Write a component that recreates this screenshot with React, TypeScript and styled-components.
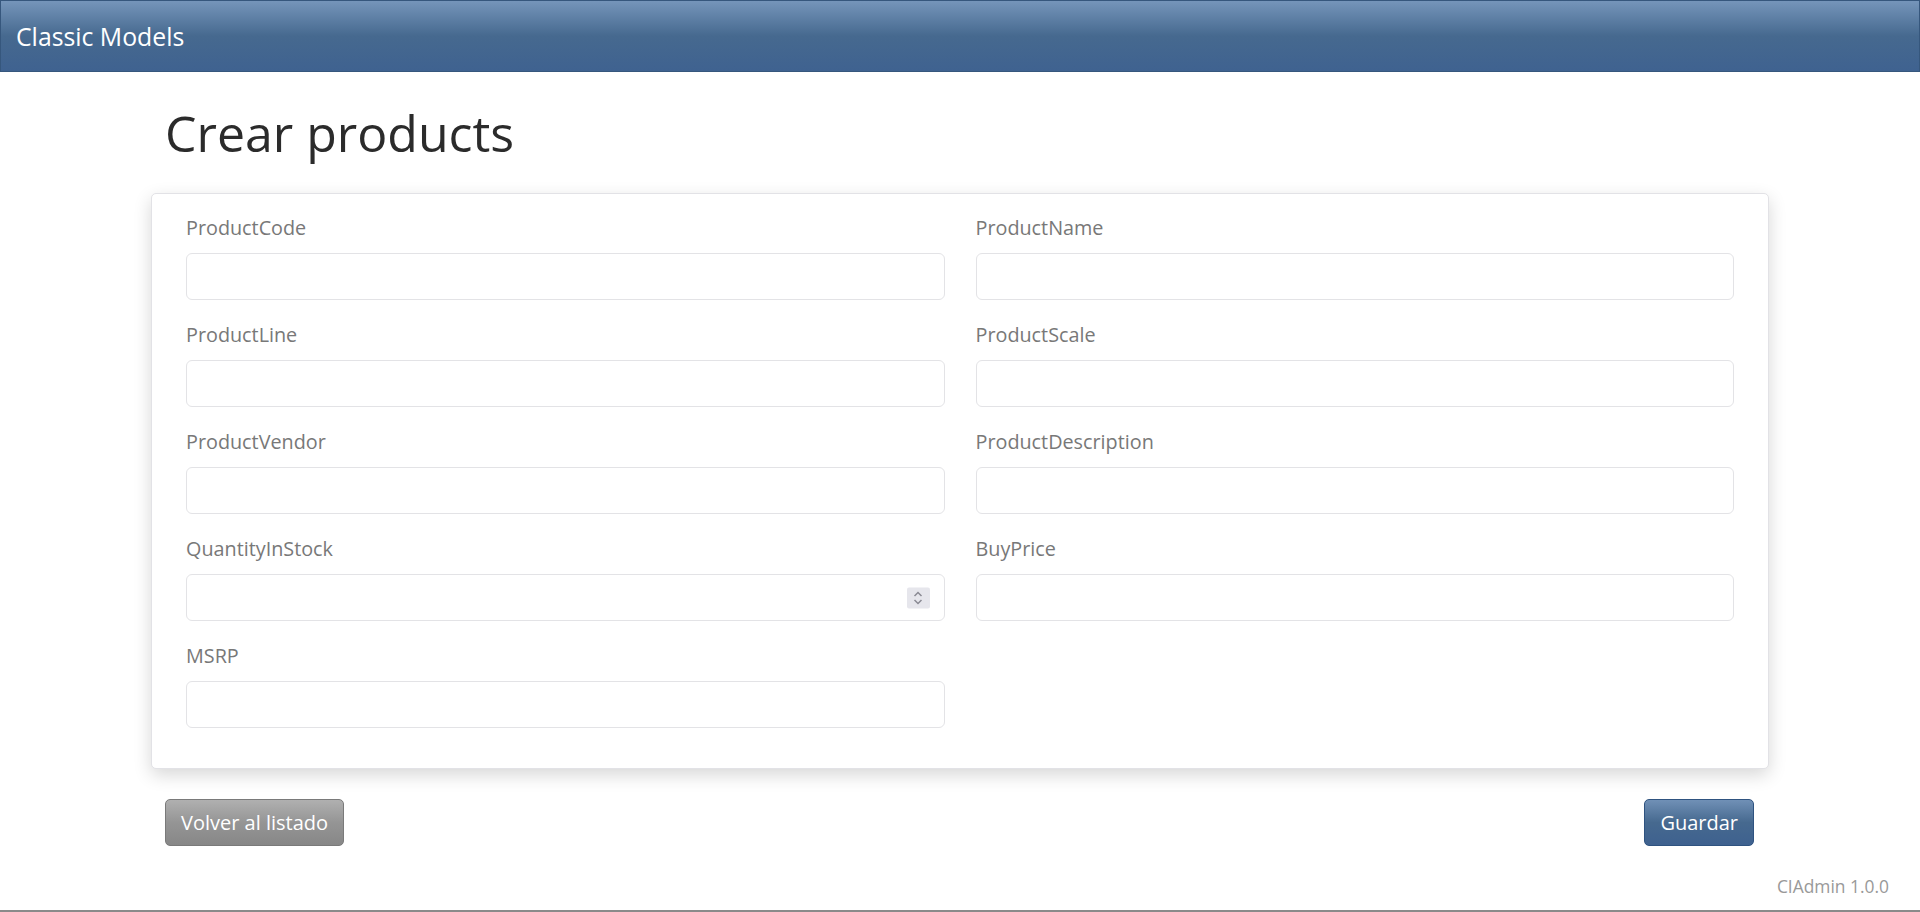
import React from 'react';
import styled, { createGlobalStyle } from 'styled-components';

const GlobalStyle = createGlobalStyle`
  html, body {
    margin: 0;
    padding: 0;
    background: #fff;
    font-family: "Open Sans", "Liberation Sans", sans-serif;
  }
  * {
    box-sizing: border-box;
  }
`;

const Page = styled.div`
  min-height: 912px;
  display: flex;
  flex-direction: column;
`;

const NavBar = styled.header`
  height: 72px;
  display: flex;
  align-items: center;
  padding: 0 15px;
  background: linear-gradient(to bottom, #7595ba 0%, #46698f 50%, #3f6290 100%);
  border: 1px solid #36577d;
  color: #fff;
  font-size: 24.8px;
`;

const Container = styled.main`
  width: 1618px;
  margin: 0 auto;
  flex: 1;
`;

const Title = styled.h1`
  margin: 0;
  padding: 24px 14px 22px;
  font-size: 50px;
  font-weight: 400;
  line-height: 75px;
  color: #2b2b2b;
`;

const Card = styled.section`
  background: #fff;
  border: 1px solid #e2e2e6;
  border-radius: 5px;
  box-shadow: 0 6px 18px rgba(0, 0, 0, 0.16);
  padding: 19px 34px 20px;
`;

const FormGrid = styled.div`
  display: grid;
  grid-template-columns: 1fr 1fr;
  column-gap: 31px;
`;

const Field = styled.div`
  display: flex;
  flex-direction: column;
  margin-bottom: 20px;
`;

const Label = styled.label`
  font-size: 19.8px;
  line-height: 30px;
  color: #787878;
  margin-bottom: 10px;
`;

const InputWrap = styled.div`
  position: relative;
`;

const Input = styled.input`
  width: 100%;
  height: 47px;
  border: 1px solid #e3e3e6;
  border-radius: 6px;
  background: #fff;
  padding: 0 14px;
  font: inherit;
  font-size: 19px;
  outline: none;
`;

const Spinner = styled.span`
  position: absolute;
  right: 15px;
  top: 50%;
  transform: translateY(-50%);
  width: 23px;
  height: 21px;
  background: #e6e6ec;
  border-radius: 2px;
  display: flex;
  align-items: center;
  justify-content: center;
`;

const Actions = styled.div`
  display: flex;
  justify-content: space-between;
  padding: 30px 15px 0 14px;
`;

const Button = styled.button<{ $variant: 'default' | 'primary' }>`
  height: 47px;
  padding: 0 15px;
  border-radius: 5px;
  font-family: "Open Sans", "Liberation Sans", sans-serif;
  font-size: 20px;
  color: #fff;
  cursor: pointer;
  border: 1px solid ${p => (p.$variant === 'primary' ? '#2f5380' : '#7a7a7a')};
  background: ${p =>
    p.$variant === 'primary'
      ? 'linear-gradient(to bottom, #7090b6 0%, #46698f 50%, #3e618f 100%)'
      : 'linear-gradient(to bottom, #b0b0b0 0%, #959595 50%, #878787 100%)'};
`;

const Version = styled.div`
  text-align: right;
  padding: 20px 31px 12px 0;
  font-size: 17.4px;
  color: #999;
`;

const BottomRule = styled.div`
  height: 2px;
  background: #8a8a8a;
`;

const fields: { name: string; spinner?: boolean }[] = [
  { name: 'ProductCode' },
  { name: 'ProductName' },
  { name: 'ProductLine' },
  { name: 'ProductScale' },
  { name: 'ProductVendor' },
  { name: 'ProductDescription' },
  { name: 'QuantityInStock', spinner: true },
  { name: 'BuyPrice' },
  { name: 'MSRP' },
];

const SpinIcon = () => (
  <svg width="12" height="17" viewBox="0 0 12 17" fill="none" stroke="#8a8a94" strokeWidth="1.5">
    <path d="M2.5 6.5 L6 3 L9.5 6.5" />
    <path d="M2.5 10.5 L6 14 L9.5 10.5" />
  </svg>
);

export default function App() {
  return (
    <Page>
      <GlobalStyle />
      <NavBar>Classic Models</NavBar>
      <Container>
        <Title>Crear products</Title>
        <Card>
          <FormGrid>
            {fields.map(f => (
              <Field key={f.name}>
                <Label>{f.name}</Label>
                <InputWrap>
                  <Input type={f.spinner ? 'number' : 'text'} />
                  {f.spinner && (
                    <Spinner>
                      <SpinIcon />
                    </Spinner>
                  )}
                </InputWrap>
              </Field>
            ))}
          </FormGrid>
        </Card>
        <Actions>
          <Button $variant="default">Volver al listado</Button>
          <Button $variant="primary">Guardar</Button>
        </Actions>
      </Container>
      <Version>CIAdmin 1.0.0</Version>
      <BottomRule />
    </Page>
  );
}
